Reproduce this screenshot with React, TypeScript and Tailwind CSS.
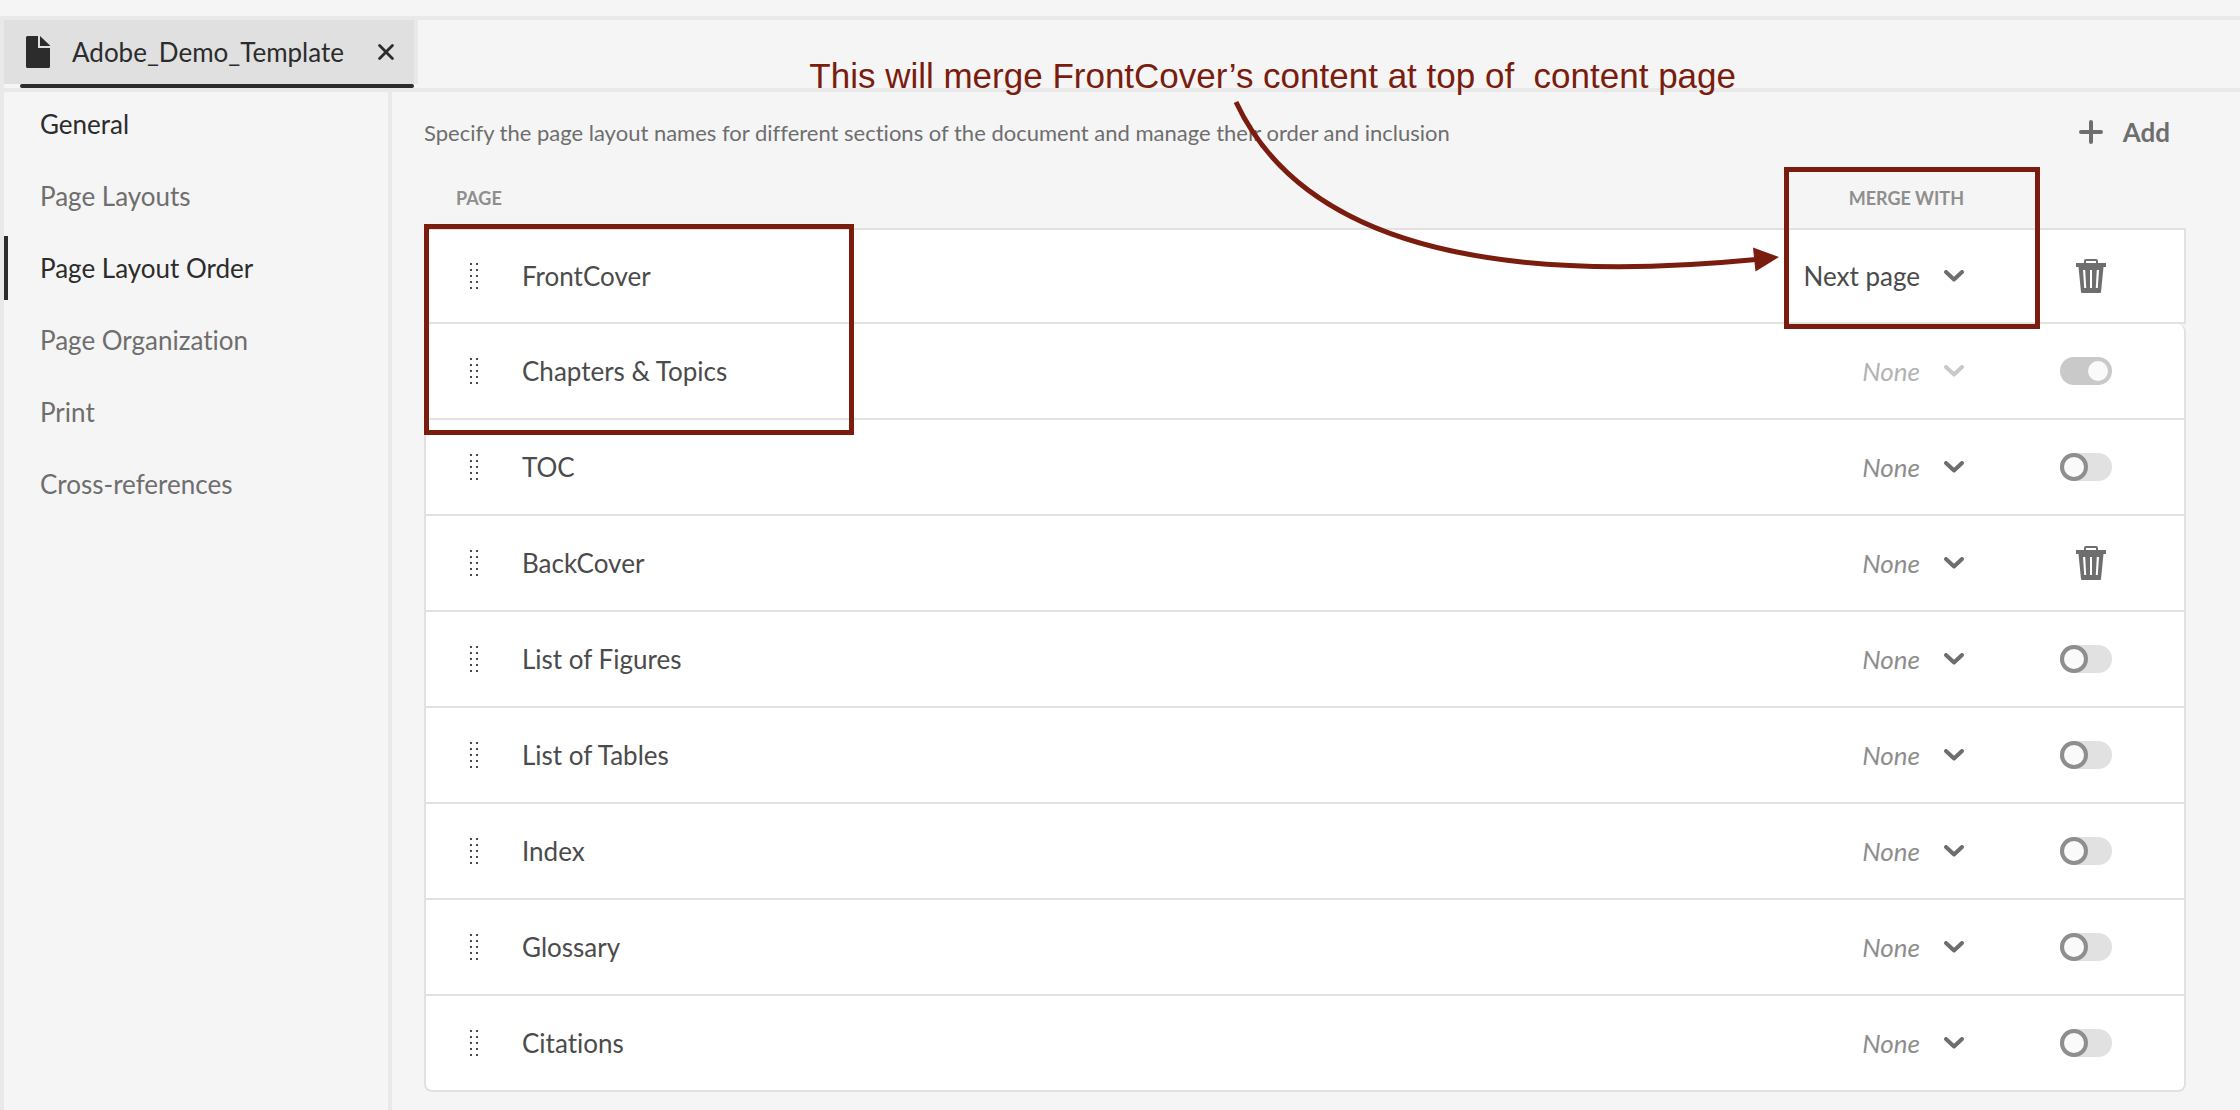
import { useState } from "react";
import clsx from "clsx";

type Merge = "None" | "Next page";

interface LayoutRow {
  name: string;
  merge: Merge;
  control: "delete" | "switch";
  included?: boolean;
  locked?: boolean;
}

const NAV = ["General", "Page Layouts", "Page Layout Order", "Page Organization", "Print", "Cross-references"];
const ACTIVE = "Page Layout Order";

const ROWS: LayoutRow[] = [
  { name: "FrontCover", merge: "Next page", control: "delete" },
  { name: "Chapters & Topics", merge: "None", control: "switch", included: true, locked: true },
  { name: "TOC", merge: "None", control: "switch" },
  { name: "BackCover", merge: "None", control: "delete" },
  { name: "List of Figures", merge: "None", control: "switch" },
  { name: "List of Tables", merge: "None", control: "switch" },
  { name: "Index", merge: "None", control: "switch" },
  { name: "Glossary", merge: "None", control: "switch" },
  { name: "Citations", merge: "None", control: "switch" },
];

function FileIcon() {
  return (
    <svg width="24" height="32" viewBox="0 0 24 32" fill="currentColor" aria-hidden="true">
      <path d="M1.500 0H12v12h12v18.500a1.500 1.500 0 0 1-1.500 1.500h-21A1.500 1.500 0 0 1 0 30.500v-29A1.500 1.500 0 0 1 1.500 0Z" />
      <path d="M14 0l10 9.600V10H14Z" />
    </svg>
  );
}

function CloseIcon() {
  return (
    <svg width="16" height="16" viewBox="0 0 16 16" fill="none" stroke="currentColor" strokeWidth="2.800" strokeLinecap="round" aria-hidden="true">
      <path d="M1.600 1.600l12.800 12.800M14.400 1.600L1.600 14.400" />
    </svg>
  );
}

function PlusIcon() {
  return (
    <svg width="24" height="24" viewBox="0 0 24 24" fill="none" stroke="currentColor" strokeWidth="4" strokeLinecap="round" aria-hidden="true">
      <path d="M12 2v20M2 12h20" />
    </svg>
  );
}

function ChevronIcon() {
  return (
    <svg width="20" height="12" viewBox="0 0 20 12" fill="none" stroke="currentColor" strokeWidth="4" strokeLinecap="round" strokeLinejoin="round" aria-hidden="true">
      <path d="M2 2l8 7.500L18 2" />
    </svg>
  );
}

function TrashIcon() {
  return (
    <svg width="30" height="34" viewBox="0 0 30 34" aria-hidden="true">
      <path d="M9 4.500V2a1 1 0 0 1 1-1h10a1 1 0 0 1 1 1v2.500" fill="none" stroke="currentColor" strokeWidth="2" />
      <path
        fill="currentColor"
        fillRule="evenodd"
        d="M0 4h30v4h-2.500L25 33a1 1 0 0 1-1 1H6a1 1 0 0 1-1-1L2.500 8H0Zm7 7 1.200 18h2L9.200 11Zm7 0v18h2V11Zm6.800 0-1 18h2L23 11Z"
      />
    </svg>
  );
}

function GripIcon() {
  return (
    <svg width="8" height="26" viewBox="0 0 8 26" fill="currentColor" aria-hidden="true">
      {[0, 6, 12, 18, 24].map((y) => (
        <path key={y} d={`M0 ${y}h2v2h-2ZM6 ${y}h2v2h-2Z`} />
      ))}
    </svg>
  );
}

function MergeSelect({ row }: { row: LayoutRow }) {
  const [value, setValue] = useState<Merge>(row.merge);
  return (
    <div className={clsx("relative inline-flex items-center", row.locked ? "text-[#c9c9c9]" : "text-[#6e6e6e]")}>
      <select
        aria-label={`Merge ${row.name} with`}
        value={value}
        disabled={row.locked}
        onChange={(e) => setValue(e.target.value as Merge)}
        className={clsx(
          "h-12 w-[200px] appearance-none bg-transparent pr-11 text-[26px] opacity-100 [text-align-last:right]",
          value === "None" && "italic",
          row.locked ? "text-[#b3b3b3]" : value === "None" ? "text-[#8e8e8e]" : "text-[#4b4b4b]",
        )}
      >
        <option value="None">None</option>
        <option value="Next page">Next page</option>
      </select>
      <span className="pointer-events-none absolute right-0">
        <ChevronIcon />
      </span>
    </div>
  );
}

function Switch({ row }: { row: LayoutRow }) {
  const [on, setOn] = useState(Boolean(row.included));
  return (
    <input
      type="checkbox"
      role="switch"
      aria-label={`Include ${row.name}`}
      checked={on}
      disabled={row.locked}
      onChange={(e) => setOn(e.target.checked)}
      className="flex h-7 w-[52px] appearance-none items-center rounded-full bg-[#e1e1e1] before:size-7 before:rounded-full before:border-4 before:border-[#8e8e8e] before:bg-[#fafafa] before:content-[''] checked:justify-end checked:bg-[#c9c9c9] checked:pr-1 checked:before:size-5 checked:before:border-0"
    />
  );
}

function Row({ row, index, last }: { row: LayoutRow; index: number; last: boolean }) {
  const cell = clsx("h-24 border-b-2 border-[#e1e1e1] bg-white p-0", index === 0 && "border-t-2");
  return (
    <tr>
      <td className={clsx(cell, "w-[98px] border-l-2 pl-11 text-[#4b4b4b]", index === 1 && "rounded-tl-lg", last && "rounded-bl-lg")}>
        <button type="button" aria-label={`Reorder ${row.name}`} className="flex cursor-grab">
          <GripIcon />
        </button>
      </td>
      <td className={clsx(cell, "text-[26px] text-[#4b4b4b]")}>{row.name}</td>
      <td className={clsx(cell, "w-[200px]")}>
        <MergeSelect row={row} />
      </td>
      <td className={clsx(cell, "w-[222px] border-r-2 pl-24", index === 1 && "rounded-tr-lg", last && "rounded-br-lg")}>
        {row.control === "delete" ? (
          <button type="button" aria-label={`Delete ${row.name}`} className="ml-4 flex text-[#6e6e6e]">
            <TrashIcon />
          </button>
        ) : (
          <Switch row={row} />
        )}
      </td>
    </tr>
  );
}

function Annotations() {
  return (
    <div className="pointer-events-none absolute inset-0 text-[#7a1d0f]">
      <div className="absolute top-[224px] left-[424px] h-[211px] w-[430px] border-5 border-current" />
      <div className="absolute top-[167px] right-[200px] h-[162px] w-[256px] border-5 border-current" />
      <p className="absolute top-14 right-[504px] text-[35px] leading-10 whitespace-pre font-['Liberation_Sans',sans-serif]">
        This will merge FrontCover’s content at top of{"  "}content page
      </p>
      <svg className="absolute top-24 right-[460px]" width="550" height="180" viewBox="1230 96 550 180" aria-hidden="true">
        <path d="M1236 102Q1329 301 1756 259.500" fill="none" stroke="currentColor" strokeWidth="5" />
        <path d="M1753 247.500L1779 257L1755.500 271.500Z" fill="currentColor" />
      </svg>
    </div>
  );
}

export default function App() {
  return (
    <div className="relative flex min-h-screen flex-col bg-[#f5f5f5] pt-4 font-[Lato,'Noto_Sans',sans-serif] [font-variant-ligatures:no-common-ligatures]">
      <div className="flex grow flex-col border-t-4 border-l-4 border-[#e9e9e9]">
        <header className="flex border-b-4 border-[#e9e9e9]">
          <div className="pb-1">
            <div className="relative flex h-16 items-center border-r-4 border-[#e9e9e9] bg-[#e0e0e0] pr-5 pl-[22px] text-[#2c2c2c]">
              <FileIcon />
              <span className="w-[328px] pl-[22px] text-[26px]">Adobe_Demo_Template</span>
              <button type="button" aria-label="Close Adobe_Demo_Template" className="flex">
                <CloseIcon />
              </button>
              <span className="absolute top-16 right-0 left-4 h-1 rounded-full bg-[#2c2c2c]" />
            </div>
          </div>
        </header>
        <div className="flex grow">
          <nav aria-label="Template settings" className="w-[388px] shrink-0 border-r-4 border-[#e9e9e9]">
            <ul className="flex flex-col gap-2">
              {NAV.map((item) => (
                <li key={item}>
                  <a
                    href="#"
                    aria-current={item === ACTIVE ? "page" : undefined}
                    className={clsx(
                      "flex h-16 items-center border-l-4 pl-8 text-[26px]",
                      item === ACTIVE ? "border-[#2c2c2c]" : "border-transparent",
                      item === ACTIVE || item === "General" ? "text-[#2c2c2c]" : "text-[#6e6e6e]",
                    )}
                  >
                    {item}
                  </a>
                </li>
              ))}
            </ul>
          </nav>
          <main className="grow pr-[54px] pb-4 pl-8 text-[#6e6e6e]">
            <div className="flex h-20 items-center justify-between pr-4">
              <p className="text-[22px]">
                Specify the page layout names for different sections of the document and manage their order and inclusion
              </p>
              <button type="button" className="flex items-center gap-5 text-[26px] font-bold">
                <PlusIcon />
                Add
              </button>
            </div>
            <table className="w-full border-separate border-spacing-0">
              <thead>
                <tr className="text-[18px] font-bold text-[#8e8e8e]">
                  <th colSpan={2} className="h-14 p-0 pb-1 pl-8 text-left">
                    PAGE
                  </th>
                  <th className="p-0 pb-1 text-right">MERGE WITH</th>
                  <td />
                </tr>
              </thead>
              <tbody>
                {ROWS.map((row, i) => (
                  <Row key={row.name} row={row} index={i} last={i === ROWS.length - 1} />
                ))}
              </tbody>
            </table>
          </main>
        </div>
      </div>
      <Annotations />
    </div>
  );
}
